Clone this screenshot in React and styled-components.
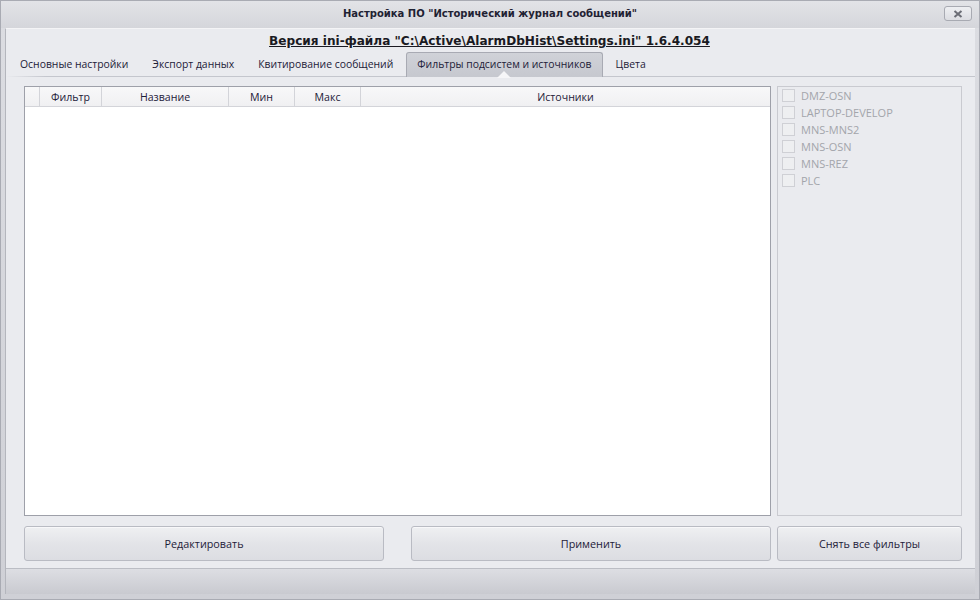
import React from "react";
import styled, { createGlobalStyle } from "styled-components";

const Global = createGlobalStyle`
  html, body { margin: 0; padding: 0; }
  body { width: 980px; height: 600px; overflow: hidden; background: #c9cad0; }
  * { box-sizing: border-box; }
`;

const UI = `"Open Sans", "Noto Sans", "DejaVu Sans", sans-serif`;

const Window = styled.div`
  width: 980px;
  height: 600px;
  display: flex;
  flex-direction: column;
  background: linear-gradient(#dcdde2, #cfd0d6);
  border: 1px solid #a9abb3;
  font-family: ${UI};
`;

const TitleBar = styled.div`
  height: 27px;
  flex: none;
  position: relative;
  display: flex;
  align-items: center;
  justify-content: center;
  padding-bottom: 3px;
  font-family: "DejaVu Sans", sans-serif;
  font-weight: bold;
  font-size: 10px;
  color: #1f2233;
  background: linear-gradient(#e2e3e7, #d5d6db);
`;

const CloseButton = styled.div`
  position: absolute;
  right: 7px;
  top: 5px;
  width: 28px;
  height: 15px;
  border: 1px solid #a8aab2;
  border-radius: 3px;
  background: linear-gradient(#eeeff2, #dcdde2);
  display: flex;
  align-items: center;
  justify-content: center;
`;

const Client = styled.div`
  flex: 1;
  margin: 0 4px 5px 4px;
  display: flex;
  flex-direction: column;
  background: #eaebef;
  border-left: 1px solid #b4b6bd;
  border-top: 1px solid #f4f4f6;
`;

const VersionLine = styled.div`
  height: 23px;
  flex: none;
  display: flex;
  align-items: center;
  justify-content: center;
  font-family: "DejaVu Sans", sans-serif;
  font-weight: bold;
  font-size: 12.1px;
  color: #1a1a22;
  text-decoration: underline;
  padding-right: 2px;
`;

const TabStrip = styled.div`
  position: relative;
  height: 25px;
  flex: none;
  display: flex;
  align-items: flex-end;
  padding-left: 3px;
  &::after {
    content: "";
    position: absolute;
    left: 0;
    right: 0;
    bottom: 0;
    height: 1px;
    background: linear-gradient(90deg, #eaebef, #c4c6cd 40px, #c4c6cd);
  }
`;

const Tab = styled.div`
  position: relative;
  height: 25px;
  padding: 0 10px 2px;
  margin-right: 2px;
  display: flex;
  align-items: center;
  font-size: 10.4px;
  color: #1d2038;
  white-space: nowrap;
  border: 1px solid ${(p) => (p.$active ? "#a8aab3" : "transparent")};
  border-bottom: none;
  border-radius: 3px 3px 0 0;
  background: ${(p) => (p.$active ? "linear-gradient(#d0d2d8, #c6c8cf)" : "transparent")};
  z-index: 1;
`;

const Notch = styled.div`
  position: absolute;
  left: 50%;
  bottom: -1px;
  width: 0;
  height: 0;
  transform: translateX(-50%);
  border-left: 6px solid transparent;
  border-right: 6px solid transparent;
  border-bottom: 6px solid #eaebef;
  &::before {
    content: "";
    position: absolute;
    left: -7px;
    top: -1px;
    border-left: 7px solid transparent;
    border-right: 7px solid transparent;
    border-bottom: 7px solid #f6f6f8;
    z-index: -1;
  }
`;

const Body = styled.div`
  flex: none;
  display: grid;
  grid-template-columns: 747px 185px;
  gap: 6px;
  padding: 9px 0 0 18px;
`;

const Table = styled.div`
  height: 430px;
  background: #ffffff;
  border: 1px solid #9ea0a9;
  display: flex;
  flex-direction: column;
`;

const HeadRow = styled.div`
  height: 20px;
  display: grid;
  grid-template-columns: 15px 62px 127px 66px 66px 1fr;
  background: linear-gradient(#f8f8f9, #f0f0f2);
  border-bottom: 1px solid #d3d4d9;
`;

const HeadCell = styled.div`
  display: flex;
  align-items: center;
  justify-content: center;
  font-size: 10.6px;
  color: #1d2038;
  border-right: 1px solid #d3d4d9;
  &:last-child { border-right: none; }
`;

const SidePanel = styled.div`
  height: 430px;
  border: 1px solid #c9cad0;
  padding: 0 0 0 4px;
  display: flex;
  flex-direction: column;
`;

const CheckRow = styled.label`
  height: 17px;
  display: flex;
  align-items: center;
  gap: 6px;
  font-size: 11px;
  color: #a3a5ab;
`;

const Box = styled.span`
  width: 13px;
  height: 13px;
  border: 1px solid #cfd0d5;
  background: #eeeff1;
  flex: none;
`;

const ButtonRow = styled.div`
  flex: none;
  display: grid;
  grid-template-columns: 747px 185px;
  gap: 6px;
  padding: 10px 0 0 18px;
  height: 52px;
`;

const Pair = styled.div`
  display: grid;
  grid-template-columns: 1fr 1fr;
  gap: 27px;
`;

const Button = styled.div`
  height: 35px;
  display: flex;
  align-items: center;
  justify-content: center;
  font-size: 10.8px;
  color: #1d2038;
  border: 1px solid #b9bbc3;
  border-radius: 3px;
  background: linear-gradient(#eff0f2, #e3e4e8 50%, #dcdde2);
  box-shadow: inset 0 1px 0 #f8f8fa;
`;

const StatusBar = styled.div`
  flex: 1;
  background: linear-gradient(#dddee3, #c9cad0);
  border-top: 1px solid #bbbdc4;
`;

const sources = ["DMZ-OSN", "LAPTOP-DEVELOP", "MNS-MNS2", "MNS-OSN", "MNS-REZ", "PLC"];
const tabs = [
  "Основные настройки",
  "Экспорт данных",
  "Квитирование сообщений",
  "Фильтры подсистем и источников",
  "Цвета",
];

export default function App() {
  return (
    <>
      <Global />
      <Window>
        <TitleBar>
          Настройка ПО "Исторический журнал сообщений"
          <CloseButton>
            <svg width="10" height="8" viewBox="0 0 10 8">
              <path d="M1.5 1 L8.5 7 M8.5 1 L1.5 7" stroke="#6b6d75" strokeWidth="2" />
            </svg>
          </CloseButton>
        </TitleBar>
        <Client>
          <VersionLine>Версия ini-файла "C:\Active\AlarmDbHist\Settings.ini" 1.6.4.054</VersionLine>
          <TabStrip>
            {tabs.map((t, i) => (
              <Tab key={t} $active={i === 3}>
                {t}
                {i === 3 && <Notch />}
              </Tab>
            ))}
          </TabStrip>
          <Body>
            <Table>
              <HeadRow>
                <HeadCell />
                <HeadCell>Фильтр</HeadCell>
                <HeadCell>Название</HeadCell>
                <HeadCell>Мин</HeadCell>
                <HeadCell>Макс</HeadCell>
                <HeadCell>Источники</HeadCell>
              </HeadRow>
            </Table>
            <SidePanel>
              {sources.map((s) => (
                <CheckRow key={s}>
                  <Box />
                  {s}
                </CheckRow>
              ))}
            </SidePanel>
          </Body>
          <ButtonRow>
            <Pair>
              <Button>Редактировать</Button>
              <Button>Применить</Button>
            </Pair>
            <Button>Снять все фильтры</Button>
          </ButtonRow>
          <StatusBar />
        </Client>
      </Window>
    </>
  );
}
